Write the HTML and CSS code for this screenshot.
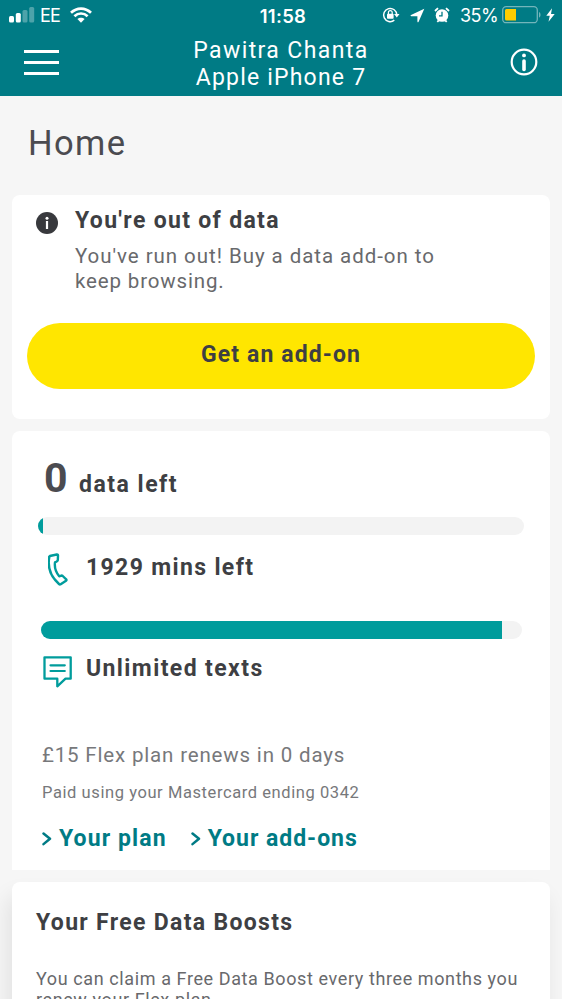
FILE: index.html
```html
<!DOCTYPE html>
<html lang="en">
<head>
<meta charset="utf-8">
<title>Home</title>
<link rel="stylesheet" href="styles.css">
</head>
<body>
<header class="header">
  <div class="status">
    <div class="status-left">
      <svg class="signal" width="26" height="16" viewBox="0 0 26 16"><g fill="#fff"><rect x="0" y="9" width="5" height="6.5" rx="1.5"/><rect x="6.8" y="6" width="5" height="9.500" rx="1.500"/><g opacity=".3"><rect x="13.500" y="3" width="5" height="12.500" rx="1.500"/><rect x="20.200" y="0" width="5" height="15.500" rx="1.500"/></g></g></svg>
      <span class="carrier">EE</span>
      <svg class="wifi" width="22" height="16" viewBox="0 0 22 16"><g fill="none" stroke="#fff" stroke-width="2.700"><path d="M1 5.800C6.800.2 15.200.2 21 5.800"/><path d="M4.400 9.200c3.800-3.600 9.400-3.600 13.200 0"/></g><path d="M11 15.700 7.400 12.100c2-1.900 5.200-1.900 7.200 0z" fill="#fff"/></svg>
    </div>
    <span class="clock">11:58</span>
    <div class="status-right">
      <svg width="18" height="16" viewBox="0 0 18 16"><path d="M14.800 7.800A6.600 6.600 0 1 0 12.300 13.200" fill="none" stroke="#fff" stroke-width="1.500"/><path d="M12 7h5.500l-2.700 3.600z" fill="#fff"/><rect x="5" y="6.800" width="6.600" height="5" rx=".8" fill="#fff"/><path d="M6.400 7V5.600a1.900 1.900 0 0 1 3.800 0V7" fill="none" stroke="#fff" stroke-width="1.200"/></svg>
      <svg class="locate" width="15" height="15" viewBox="0 0 15 15"><path d="M14.300.8 8.500 14Q7.700 14.900 7.400 13.500V8.200H1.200Q-.1 7.700 1 6.900z" fill="#fff"/></svg>
      <svg class="alarm" width="16" height="16" viewBox="0 0 16 16"><circle cx="8" cy="8.500" r="6.300" fill="#fff"/><path d="M1 4 4 1.200M15 4l-3-2.800M3.300 14.800l1.500-1.500M12.700 14.800l-1.500-1.500" stroke="#fff" stroke-width="1.800"/><path d="M8 4.800v4H5" fill="none" stroke="#007b85" stroke-width="1.300"/></svg>
      <span class="percent">35%</span>
      <svg class="battery" width="40" height="18" viewBox="0 0 40 18"><rect x=".7" y=".7" width="34.600" height="16" rx="3.500" fill="none" stroke="#73b5bb" stroke-width="1.300"/><path d="M3 4.500A1.500 1.500 0 0 1 4.500 3H14v11.500H4.500A1.500 1.500 0 0 1 3 13z" fill="#ffcc00"/><path d="M37 6c2 .6 2 5 0 5.600z" fill="#73b5bb"/></svg>
      <svg width="9" height="14" viewBox="0 0 9 14"><path d="M6 .3.3 7.800h3.500L2.500 13.700 8.700 5.900H5z" fill="#fff"/></svg>
    </div>
  </div>
  <div class="nav">
    <div class="menu"><i></i><i></i><i></i></div>
    <div class="account"><div class="name">Pawitra Chanta</div><div class="device">Apple iPhone 7</div></div>
    <svg class="info" width="28" height="28" viewBox="0 0 28 28"><circle cx="14" cy="14" r="12.300" fill="none" stroke="#fff" stroke-width="2.200"/><circle cx="14" cy="7.400" r="1.900" fill="#fff"/><path d="M14 13v8.500" stroke="#fff" stroke-width="3.600" stroke-linecap="round"/></svg>
  </div>
</header>
<main>
  <h1>Home</h1>
  <section class="card alert">
    <div class="notice">
      <svg width="22" height="22" viewBox="0 0 22 22"><circle cx="11" cy="11" r="11" fill="#38393d"/><circle cx="11" cy="6.300" r="1.500" fill="#fff"/><path d="M11 9v8" stroke="#fff" stroke-width="2.200"/></svg>
      <div><h2>You're out of data</h2><p><span class="run">You've run out! Buy a data add-on to</span><br><span class="keep">keep browsing.</span></p></div>
    </div>
    <button class="cta">Get an add-on</button>
  </section>
  <section class="card usage">
    <div class="data"><b class="zero">0</b><b class="dleft">data left</b></div>
    <div class="bar bar-data"><div class="fill" style="width:1.1%"></div></div>
    <div class="row mins"><svg width="20" height="33" viewBox="0 0 20 33"><path d="M1.800 3 8.800 1.500Q10 1.300 10 2.600L9.800 7.200Q9.700 8.100 8.800 8.500L7 9.300C6.300 14.500 8 19.500 11.200 23.300L13.300 22.600Q14 22.400 14.700 23L18.200 26.300Q18.900 27.100 18 27.800L12.700 31.200Q11.800 31.700 11 31C2.500 23.500-.5 13.500 1.300 4Q1.300 3.200 1.800 3Z" fill="none" stroke="#009c9c" stroke-width="2.400" stroke-linejoin="round"/></svg><b>1929 mins left</b></div>
    <div class="bar bar-mins"><div class="fill" style="width:96%"></div></div>
    <div class="row texts"><svg width="30" height="32" viewBox="0 0 30 32"><path d="M1.500 1.300h26.200v21.400h-5.200l-8.200 7.600v-7.600H1.500z" fill="none" stroke="#009c9c" stroke-width="2.300" stroke-linejoin="round"/><path d="M7.500 9.300h14.300M7.500 15h14.300" stroke="#009c9c" stroke-width="2.200" stroke-linecap="round"/></svg><b>Unlimited texts</b></div>
    <p class="plan">£15 Flex plan renews in 0 days</p>
    <p class="paid">Paid using your Mastercard ending 0342</p>
    <div class="links">
      <a><svg width="10" height="14" viewBox="0 0 10 14"><path d="m1.500 1.500 6.500 5.300-6.500 5.300" fill="none" stroke="#007b85" stroke-width="2.500" stroke-linecap="round" stroke-linejoin="round"/></svg><span class="l1">Your plan</span></a>
      <a><svg width="10" height="14" viewBox="0 0 10 14"><path d="m1.500 1.500 6.500 5.300-6.500 5.300" fill="none" stroke="#007b85" stroke-width="2.500" stroke-linecap="round" stroke-linejoin="round"/></svg><span class="l2">Your add-ons</span></a>
    </div>
  </section>
  <section class="card boosts">
    <h2>Your Free Data Boosts</h2>
    <p><span class="claim">You can claim a Free Data Boost every three months you</span><br><span class="renew">renew your Flex plan.</span></p>
  </section>
</main>
</body>
</html>
```
FILE: styles.css
```css
* { box-sizing: border-box; margin: 0; padding: 0; }
html, body { height: 999px; overflow: hidden; }
body { width: 562px; background: #f6f6f6; color: #3e3f43; font-family: Roboto, "Open Sans", sans-serif; white-space: nowrap; }
svg { display: block; flex: none; }
.header { height: 96px; background: #007b85; color: #fff; }
.status { display: grid; grid-template-columns: 1fr auto 1fr; height: 30px; align-items: center; padding: 0 7px 0 9px; }
.status-left, .status-right { display: flex; align-items: center; }
.status-right { justify-content: flex-end; }
.carrier { margin: 1px 10px 0 5px; font: 18px/20px Inter, sans-serif; letter-spacing: -.9px; }
.clock { font: 600 18.5px/20px Inter, sans-serif; letter-spacing: .3px; padding: 1px 0 0 2px; }
.locate { margin-left: 10px; }
.alarm { margin-left: 9px; }
.percent { margin: 1px 4px 0 10px; font: 18px/20px Inter, sans-serif; letter-spacing: -.6px; }
.battery { margin-right: 4px; }
.nav { display: grid; grid-template-columns: 1fr auto 1fr; align-items: start; height: 66px; padding: 0 24px; }
.menu { display: flex; flex-direction: column; gap: 8px; padding-top: 20px; width: 35px; }
.menu i { height: 3px; background: #fff; }
.account { text-align: center; font-size: 23px; line-height: 27px; padding-top: 7px; }
.name { letter-spacing: 1.4px; }
.device { letter-spacing: 1.2px; }
.info { margin-top: 18px; justify-self: end; }
h1 { height: 99px; padding: 27px 0 0 28px; font-size: 34.5px; line-height: 40px; font-weight: 400; letter-spacing: 1.4px; color: #4b4b50; }
.card { width: 538px; margin: 0 auto 12px; background: #fff; border-radius: 8px; }
.alert { height: 224px; padding: 12px 15px 0; }
.notice { display: flex; padding-left: 9px; }
.notice svg { margin: 5px 17px 0 0; }
h2 { font-size: 23px; line-height: 27px; font-weight: 700; letter-spacing: 1.32px; }
.notice p { margin-top: 10px; font-size: 20.5px; line-height: 25px; color: #68696c; }
.run { letter-spacing: .95px; }
.keep { letter-spacing: .85px; }
.cta { display: block; width: 508px; height: 66px; margin-top: 29px; border: 0; border-radius: 33px; background: #ffe600; color: #3e3f43; font: 700 23px/27px Roboto, sans-serif; letter-spacing: 1.1px; padding-bottom: 3px; }
.usage { height: 439px; border-radius: 8px 8px 0 0; padding-top: 23px; }
.data { display: flex; align-items: baseline; padding-left: 32px; height: 62.500px; }
.zero { font-size: 41px; line-height: 48px; width: 35px; color: #4b4b50; }
.dleft { font-size: 23px; letter-spacing: 1.5px; }
.bar { height: 18px; border-radius: 9px; background: #f3f3f3; overflow: hidden; }
.fill { height: 100%; background: #009c9c; }
.bar-data { width: 486px; margin-left: 26px; }
.bar-mins { width: 481px; margin-left: 28.5px; }
.row { display: flex; font-size: 23px; line-height: 27px; }
.mins { height: 86.500px; padding: 18px 0 0 36px; }
.mins b { margin: 1px 0 0 18px; letter-spacing: 1.35px; }
.texts { height: 103px; padding: 17px 0 0 31px; }
.texts b { margin: -1px 0 0 13px; letter-spacing: 1.4px; }
.plan { padding-left: 30px; font-size: 20.5px; line-height: 26px; letter-spacing: .83px; color: #77787b; }
.paid { padding: 14px 0 0 30px; font-size: 16.5px; line-height: 22px; letter-spacing: .58px; color: #77787b; }
.links { display: flex; gap: 24px; padding: 21px 0 0 30px; }
.links a { display: flex; align-items: center; gap: 7px; font-size: 23px; line-height: 27px; font-weight: 700; color: #007b85; }
.l1 { letter-spacing: 1.1px; }
.l2 { letter-spacing: .97px; }
.boosts { height: 180px; padding: 27px 24px 0; box-shadow: -4px 14px 22px rgba(0,0,0,.09); }
.boosts p { margin-top: 32px; font-size: 18px; line-height: 21px; color: #68696c; }
.claim, .renew { letter-spacing: .6px; }
```
